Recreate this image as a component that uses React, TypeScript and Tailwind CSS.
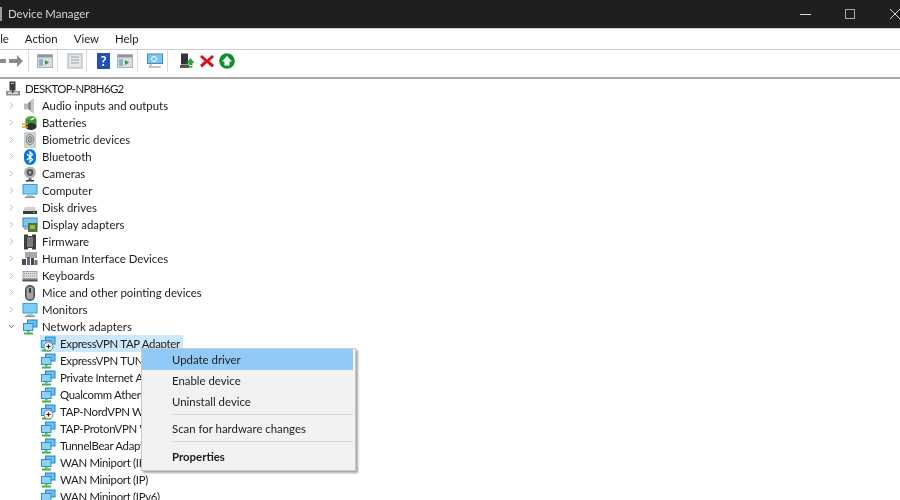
import { ReactNode } from 'react';
import { ChevronRight, ChevronDown } from 'lucide-react';

const Svg = ({ children, className = 'w-4 h-4' }: { children: ReactNode; className?: string }) => (
  <svg viewBox="0 0 16 16" className={className + ' shrink-0'}>{children}</svg>
);

const PcIcon = () => (
  <Svg>
    <rect x="4.5" y="0.5" width="6" height="9" fill="#3d3d3d" />
    <rect x="6" y="2" width="3" height="1" fill="#bbb" />
    <rect x="1" y="10" width="14" height="4.5" fill="#8f8f8f" />
    <rect x="3" y="11" width="10" height="2" fill="#d5d5d5" />
    <rect x="7" y="9" width="1.5" height="3" fill="#444" />
  </Svg>
);
const AudioIcon = () => (
  <Svg>
    <rect x="2" y="5.5" width="4" height="6" fill="#b9b9b9" />
    <path d="M6 5 L12 0.5 V15.5 L6 11 Z" fill="#8e8e8e" />
    <path d="M9 3 L12 0.5 V15.5 L9 13 Z" fill="#c9c9c9" />
  </Svg>
);
const BatteryIcon = () => (
  <Svg>
    <ellipse cx="9" cy="4.5" rx="5.5" ry="3.5" fill="#4fae45" />
    <rect x="3.5" y="4.5" width="11" height="7" fill="#3c8e38" />
    <ellipse cx="9" cy="11.5" rx="5.5" ry="3.5" fill="#2f2f2f" />
    <path d="M0 9 H6 M0 12 H6" stroke="#d9a520" strokeWidth="1.4" />
    <path d="M9 5 L12 3" stroke="#fff" strokeWidth="1.5" />
  </Svg>
);
const BiometricIcon = () => (
  <Svg>
    <rect x="2" y="0" width="12" height="16" rx="1" fill="#c9d2cf" />
    <ellipse cx="8" cy="7.5" rx="3.8" ry="5" fill="none" stroke="#7d7d7d" strokeWidth="1" />
    <ellipse cx="8" cy="7.5" rx="2" ry="3" fill="none" stroke="#6f6f6f" strokeWidth="1" />
    <path d="M8 5.5 V10" stroke="#777" />
  </Svg>
);
const BluetoothIcon = () => (
  <Svg>
    <rect x="2" y="0" width="12" height="16" rx="6" fill="#0a78d7" />
    <path d="M5 5 L10.5 10.5 L8 13 V3 L10.5 5.5 L5 11" fill="none" stroke="#fff" strokeWidth="1.2" />
  </Svg>
);
const CameraIcon = () => (
  <Svg>
    <circle cx="8" cy="6.5" r="6" fill="#b5b5b5" />
    <circle cx="8" cy="6.5" r="3.4" fill="#555" />
    <circle cx="8" cy="6.5" r="1.4" fill="#9ab" />
    <rect x="6.5" y="12" width="3" height="2" fill="#777" />
    <rect x="4" y="14" width="8" height="1.5" fill="#333" />
  </Svg>
);
const ComputerIcon = () => (
  <Svg>
    <rect x="0.5" y="1" width="15" height="10.5" fill="#2f9fe4" />
    <rect x="1.5" y="2" width="13" height="8.5" fill="#7ecbf3" />
    <rect x="5" y="12" width="6" height="1.5" fill="#bdbdbd" />
    <rect x="3" y="13.5" width="10" height="1.5" fill="#8c8c8c" />
  </Svg>
);
const DiskIcon = () => (
  <Svg>
    <path d="M3 7 H13 L15 11 H1 Z" fill="#cfcfcf" />
    <rect x="1" y="11" width="14" height="3" fill="#3a3a3a" />
    <rect x="11" y="12" width="2" height="1" fill="#59c94f" />
  </Svg>
);
const DisplayIcon = () => (
  <Svg>
    <rect x="0.5" y="0.5" width="15" height="10" fill="#2f86c4" />
    <rect x="1.5" y="1.5" width="13" height="8" fill="#7ec4ee" />
    <rect x="6" y="6" width="9.5" height="9" fill="#3c7f3c" />
    <rect x="8" y="8" width="5" height="4" fill="#c9a53a" />
    <rect x="2" y="11" width="4" height="1.5" fill="#999" />
  </Svg>
);
const FirmwareIcon = () => (
  <Svg>
    <path d="M2 0.5 H6 V2 H10 V0.5 H14 V15.5 H10 V14 H6 V15.5 H2 Z" fill="#3f3f3f" />
    <rect x="5" y="3" width="6" height="10" fill="#7b7b7b" />
  </Svg>
);
const HidIcon = () => (
  <Svg>
    <rect x="3" y="1" width="12" height="6" fill="#a8a8a8" />
    <rect x="0" y="8" width="4" height="6" fill="#4d4d4d" />
    <rect x="5" y="6" width="3" height="8" fill="#5a6c80" />
    <rect x="9" y="7" width="3" height="7" fill="#444" />
    <rect x="12.5" y="9" width="3" height="5" fill="#707070" />
  </Svg>
);
const KeyboardIcon = () => (
  <Svg>
    <rect x="0.5" y="3" width="15" height="10" fill="#a5a5a5" />
    <rect x="1.5" y="4" width="13" height="6" fill="#dcdcdc" />
    <path d="M2 5.5 H14 M2 8 H14" stroke="#9a9a9a" strokeDasharray="1 1" />
    <rect x="0.5" y="11.5" width="15" height="2" fill="#555" />
  </Svg>
);
const MouseIcon = () => (
  <Svg>
    <rect x="3" y="0" width="10" height="16" rx="5" fill="#4b4b4b" />
    <rect x="4.5" y="1.5" width="7" height="13" rx="3.5" fill="#9fa5ab" />
    <rect x="7" y="3" width="2" height="5" rx="1" fill="#333" />
  </Svg>
);
const NetIcon = ({ disabled }: { disabled?: boolean }) => (
  <Svg>
    <rect x="5" y="0.5" width="10.5" height="8" fill="#1f86cc" />
    <rect x="6" y="1.5" width="8.5" height="6" fill="#6fc0ee" />
    <rect x="1" y="4" width="10.5" height="8" fill="#2a8fd6" />
    <rect x="2" y="5" width="8.5" height="6" fill="#8fd2f5" />
    <rect x="5" y="12" width="2.5" height="1.5" fill="#5cc04d" />
    <rect x="2" y="13.5" width="9" height="2" fill="#49b23a" />
    {disabled && (
      <>
        <circle cx="8.5" cy="10.5" r="4.5" fill="#efefef" stroke="#666" strokeWidth="0.8" />
        <path d="M6.5 10.5 H10.5 M8.5 8.5 V12.5" stroke="#222" strokeWidth="1.2" />
      </>
    )}
  </Svg>
);

const groups: { label: string; icon: ReactNode }[] = [
  { label: 'Audio inputs and outputs', icon: <AudioIcon /> },
  { label: 'Batteries', icon: <BatteryIcon /> },
  { label: 'Biometric devices', icon: <BiometricIcon /> },
  { label: 'Bluetooth', icon: <BluetoothIcon /> },
  { label: 'Cameras', icon: <CameraIcon /> },
  { label: 'Computer', icon: <ComputerIcon /> },
  { label: 'Disk drives', icon: <DiskIcon /> },
  { label: 'Display adapters', icon: <DisplayIcon /> },
  { label: 'Firmware', icon: <FirmwareIcon /> },
  { label: 'Human Interface Devices', icon: <HidIcon /> },
  { label: 'Keyboards', icon: <KeyboardIcon /> },
  { label: 'Mice and other pointing devices', icon: <MouseIcon /> },
  { label: 'Monitors', icon: <ComputerIcon /> },
];

const adapters = [
  { label: 'ExpressVPN TAP Adapter', disabled: true, selected: true },
  { label: 'ExpressVPN TUN Driver' },
  { label: 'Private Internet Access Network Adapter' },
  { label: 'Qualcomm Atheros Wireless Adapter' },
  { label: 'TAP-NordVPN Windows Adapter', disabled: true },
  { label: 'TAP-ProtonVPN Windows Adapter' },
  { label: 'TunnelBear Adapter V9' },
  { label: 'WAN Miniport (IKEv2)' },
  { label: 'WAN Miniport (IP)' },
  { label: 'WAN Miniport (IPv6)' },
];

const Sep = () => <div className="w-px h-[22px] bg-[#dcdcdc]" />;

const ToolPanel = ({ accent }: { accent: string }) => (
  <Svg className="w-4 h-4">
    <rect x="0.5" y="1.5" width="15" height="13" fill="#d9dfe3" stroke="#a9b2b8" />
    <rect x="1" y="2" width="14" height="2.5" fill="#8d98a0" />
    <rect x="2" y="6" width="4" height="7" fill="#8bb3d0" />
    <path d="M8 7 L12 9.5 L8 12 Z" fill={accent} />
  </Svg>
);

function Toolbar() {
  return (
    <div className="h-[22px] mb-[5px] flex items-center -ml-[9px] shrink-0">
      <svg viewBox="0 0 16 16" className="w-4 h-4 shrink-0"><path d="M15 6 H7 V2 L1 8 L7 14 V10 H15 Z" fill="#8a8a8a" /></svg>
      <svg viewBox="0 0 16 16" className="w-4 h-4 ml-[1px] shrink-0"><path d="M1 6 H9 V2 L15 8 L9 14 V10 H1 Z" fill="#8a8a8a" /></svg>
      <div className="ml-[4px]"><Sep /></div>
      <div className="ml-[8px]"><ToolPanel accent="#3b9a3b" /></div>
      <div className="ml-[4px]"><Sep /></div>
      <div className="ml-[9px]">
        <Svg>
          <rect x="1" y="1" width="14" height="14" fill="#e4e8ea" stroke="#a5adb3" />
          <path d="M4 4 H12 M4 7 H12 M4 10 H12" stroke="#9aa4ab" />
        </Svg>
      </div>
      <div className="ml-[3px]"><Sep /></div>
      <div className="ml-[10px] w-[13px] h-[16px] bg-[#2450b4] text-white text-[13px] leading-[16px] text-center font-bold shrink-0">?</div>
      <div className="ml-[7px]"><ToolPanel accent="#2f9a3a" /></div>
      <div className="ml-[4px]"><Sep /></div>
      <div className="ml-[9px]">
        <Svg>
          <rect x="0.5" y="1" width="15" height="9.5" fill="#7cc3ee" stroke="#3f8fc4" />
          <circle cx="7" cy="6" r="2.5" fill="none" stroke="#fff" />
          <path d="M5 10.5 L2 14 H14" fill="none" stroke="#8a8a8a" />
        </Svg>
      </div>
      <div className="ml-[4px]"><Sep /></div>
      <div className="ml-[11px]">
        <Svg>
          <rect x="2" y="0.5" width="7" height="11" fill="#333" />
          <rect x="1" y="12" width="9" height="3" fill="#555" />
          <path d="M11.5 5 L15.5 10 H13.5 V12 H9.5 V10 H7.5 Z" fill="#25a83c" />
          <rect x="9.5" y="13" width="4" height="1.5" fill="#25a83c" />
        </Svg>
      </div>
      <div className="ml-[4px]">
        <Svg>
          <path d="M3 2 L8 6.5 L13 2 L15 4 L10.5 8 L15 12 L13 14.5 L8 10 L3 14.5 L1 12 L5.5 8 L1 4 Z" fill="#d8101c" />
        </Svg>
      </div>
      <div className="ml-[4px]">
        <Svg>
          <circle cx="8" cy="8" r="7.8" fill="#0d9028" />
          <path d="M8 3 L13 8.5 H10.5 V12.5 H5.5 V8.5 H3 Z" fill="#fff" />
        </Svg>
      </div>
    </div>
  );
}

function TreeRow({ indent, toggle, icon, label, labelClass = '', selected }: { indent: string; toggle?: ReactNode; icon: ReactNode; label: string; labelClass?: string; selected?: boolean }) {
  return (
    <div className={'h-[17.03px] flex items-center whitespace-nowrap ' + indent}>
      {toggle}
      <div className={'flex items-center h-full pr-[3px] ' + (selected ? 'bg-[#cce8ff]' : '')}>
        {icon}
        <span className={'ml-[4px] ' + labelClass}>{label}</span>
      </div>
    </div>
  );
}

export default function App() {
  return (
    <div className="relative w-[900px] h-[500px] overflow-hidden bg-white text-[#1c1c1c] text-[11.4px] font-['Lato','Open_Sans',sans-serif] flex flex-col blur-[0.3px]">
      <div className="h-[28px] bg-[#1f1f1f] flex items-center text-[#d6d6d6] shrink-0">
        <div className="w-[2px] h-[14px] bg-[#9a9a9a]" />
        <span className="ml-[6px]">Device Manager</span>
        <svg viewBox="0 0 100 12" className="ml-auto w-[100px] h-[12px] mr-0 shrink-0" fill="none" stroke="#d8d8d8">
          <path d="M0 6.5 H11" />
          <rect x="45.5" y="1.5" width="9" height="9" stroke="#a8a8a8" />
          <path d="M90 1 L100 11 M100 1 L90 11" />
        </svg>
      </div>
      <div className="h-[22px] border-t border-[#cfcfcf] border-b flex items-center gap-[16px] -ml-[9px] shrink-0">
        <span>File</span>
        <span>Action</span>
        <span>View</span>
        <span>Help</span>
      </div>
      <Toolbar />
      <div className="h-[2px] bg-[#a9a9a9] shrink-0" />
      <div className="pt-px">
        <TreeRow indent="pl-[5px]" icon={<PcIcon />} label="DESKTOP-NP8H6G2" labelClass="tracking-[-0.6px]" />
        {groups.map(g => (
          <TreeRow
            key={g.label}
            indent="pl-[7px]"
            toggle={<ChevronRight className="w-[9px] h-[9px] mr-[6px] text-[#a0a0a0] shrink-0" strokeWidth={2} />}
            icon={g.icon}
            label={g.label}
          />
        ))}
        <TreeRow
          indent="pl-[7px]"
          toggle={<ChevronDown className="w-[9px] h-[9px] mr-[6px] text-[#404040] shrink-0" strokeWidth={2} />}
          icon={<NetIcon />}
          label="Network adapters"
        />
        {adapters.map(a => (
          <TreeRow key={a.label} indent="pl-[40px]" icon={<NetIcon disabled={a.disabled} />} label={a.label} labelClass="tracking-[-0.3px]" selected={a.selected} />
        ))}
      </div>

      {/* context menu */}
      <div className="absolute left-[141px] top-[348px] w-[215px] h-[123px] bg-[#f2f2f2] border border-[#c8c8c8] shadow-[2px_2px_2px_rgba(0,0,0,0.35)] pr-[2px]">
        <div className="h-[21px] bg-[#91c9f7] flex items-center pl-[30px] pt-px">Update driver</div>
        <div className="h-[21px] flex items-center pl-[30px] pt-px">Enable device</div>
        <div className="h-[21px] flex items-center pl-[30px] pt-px">Uninstall device</div>
        <div className="h-px bg-[#d8d8d8] ml-[30px] mt-[2px] mb-[3px]" />
        <div className="h-[21px] flex items-center pl-[30px] pt-px">Scan for hardware changes</div>
        <div className="h-px bg-[#d8d8d8] ml-[30px] mt-[2px] mb-[4px]" />
        <div className="h-[21px] flex items-center pl-[30px] pt-px font-bold">Properties</div>
      </div>
    </div>
  );
}
